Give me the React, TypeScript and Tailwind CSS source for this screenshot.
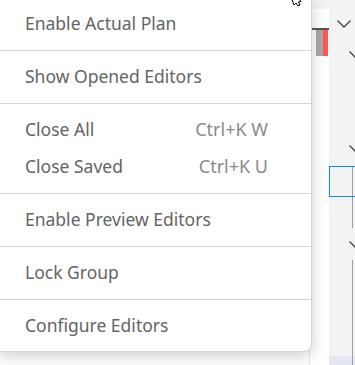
import React from 'react';

type Item = { label: string; keys?: string };

const groups: Item[][] = [
  [{ label: 'Enable Actual Plan' }],
  [{ label: 'Show Opened Editors' }],
  [
    { label: 'Close All', keys: 'Ctrl+K W' },
    { label: 'Close Saved', keys: 'Ctrl+K U' },
  ],
  [{ label: 'Enable Preview Editors' }],
  [{ label: 'Lock Group' }],
  [{ label: 'Configure Editors' }],
];

function Chevron({ className }: { className?: string }) {
  return (
    <svg width="14" height="8" viewBox="0 0 14 8" className={className}>
      <path d="M0.5 0.5 L7 7 L13.5 0.5" fill="none" stroke="#424242" strokeWidth="1.3" />
    </svg>
  );
}

export default function App() {
  return (
    <div
      className="relative w-[355px] h-[365px] overflow-hidden bg-white flex"
      style={{ fontFamily: '"Segoe UI", "Noto Sans", "Open Sans", sans-serif' }}
    >
      {/* editor + overview ruler */}
      <div className="w-[329px] flex flex-col">
        <div className="h-[9px] bg-[#f3f3f3]" />
        <div className="flex-1 flex">
          <div className="w-[310px] border-r border-[#e8e8e8]" />
          <div className="w-[2px]" />
          <div className="w-[17px] flex flex-col">
            <div className="h-[19px]" />
            <div className="h-[2px] bg-[#555555]" />
            <div className="flex h-[26px]">
              <div className="ml-[4px] w-[7px] bg-[#a9a9a9]" />
              <div className="w-[5px] bg-[#ff5757]" />
            </div>
          </div>
        </div>
      </div>

      {/* side panel */}
      <div className="flex-1 bg-[#f3f3f3] flex flex-col">
        <div className="h-[20px]" />
        <Chevron className="ml-[8px]" />
        <div className="h-[23px]" />
        <Chevron className="ml-[20px]" />
        <div className="h-[86px]" />
        <Chevron className="ml-[20px]" />
        <div className="h-[13px]" />
        <div className="h-[31px] border border-[#0090f1]">
          <div className="ml-[22px] h-full border-l border-[#a0a0a0]" />
        </div>
        <div className="h-[31px] ml-[23px] border-l border-[#a0a0a0]" />
        <div className="h-[13px]" />
        <Chevron className="ml-[20px]" />
        <div className="h-[11px]" />
        <div className="flex-1 ml-[23px] border-l border-[#a0a0a0]" />
        <div className="h-[9px] bg-[#e4e6f2]">
          <div className="ml-[23px] h-full border-l border-[#a0a0a0]" />
        </div>
      </div>

      {/* context menu */}
      <div className="absolute left-[-1px] top-[-1px] w-[313px] bg-white border border-[#d4d4d4] rounded-br-[8px] pt-[5px] pb-[7px] shadow-[0_4px_16px_rgba(0,0,0,0.2)]">
        {groups.map((group, gi) => (
          <div key={gi}>
            {gi > 0 && <div className="h-px bg-[#d4d4d4] mt-2 mb-[7px]" />}
            {group.map((item) => (
              <div
                key={item.label}
                className="h-[37px] flex items-center justify-between pl-[25px] pr-[43px] text-[17.5px] text-[#646464]"
              >
                <span>{item.label}</span>
                {item.keys && <span className="text-[18px] text-[#8a8a8a]">{item.keys}</span>}
              </div>
            ))}
          </div>
        ))}
      </div>

      {/* mouse cursor tail */}
      <svg className="absolute left-[289px] top-0" width="14" height="7" viewBox="0 0 14 7">
        <path d="M2 -3 L5 5 L7 3 L9 6 L11 5 L9.5 2 L12 1.5 L8 -3 Z" fill="#ffffff" stroke="#000000" strokeWidth="1" />
      </svg>
    </div>
  );
}
